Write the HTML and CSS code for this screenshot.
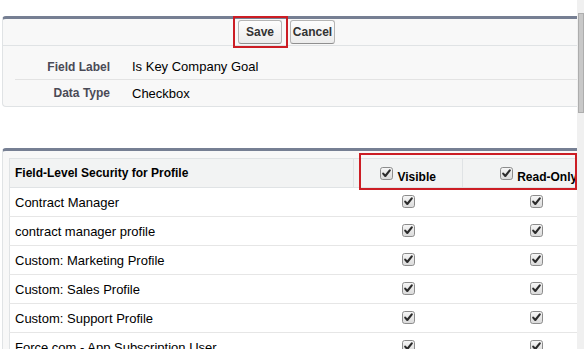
FILE: index.html
```html
<!DOCTYPE html>
<html>
<head>
<meta charset="utf-8">
<link rel="stylesheet" href="styles.css">
</head>
<body>
<svg class="defs" width="0" height="0" aria-hidden="true">
  <defs>
    <linearGradient id="cbg" x1="0" y1="0" x2="0" y2="1">
      <stop offset="0" stop-color="#f7f7f7"/>
      <stop offset="1" stop-color="#d9d9d9"/>
    </linearGradient>
    <symbol id="cb" viewBox="0 0 13 13">
      <rect x="0.5" y="0.5" width="12" height="12" rx="2.2" fill="url(#cbg)" stroke="#8c8c8c"/>
      <path d="M3.2 6.6 L5.3 9 L9.8 3.3" fill="none" stroke="#2b2b2b" stroke-width="2.1" stroke-linecap="round" stroke-linejoin="round"/>
    </symbol>
  </defs>
</svg>
<div class="viewport">
  <main class="page">
    <section class="panel panel-edit">
      <div class="btn-row">
        <button class="btn btn-save">Save</button>
        <button class="btn btn-cancel">Cancel</button>
      </div>
      <div class="details">
        <div class="drow drow-sep"><span class="dlabel">Field Label</span><span class="dval">Is Key Company Goal</span></div>
        <div class="drow"><span class="dlabel">Data Type</span><span class="dval">Checkbox</span></div>
      </div>
    </section>
    <section class="panel panel-fls">
      <span class="highlight"></span>
      <table class="fls">
        <colgroup><col class="c1"><col class="c2"><col class="c3"></colgroup>
        <thead>
          <tr>
            <th class="th-name">Field-Level Security for Profile</th>
            <th class="th-cb"><span class="th-in"><svg class="cb cb-h"><use href="#cb"/></svg> Visible</span></th>
            <th class="th-cb"><span class="th-in th-in-ro"><svg class="cb cb-h"><use href="#cb"/></svg> Read-Only</span></th>
          </tr>
        </thead>
        <tbody>
          <tr><td>Contract Manager</td><td class="td-cb"><svg class="cb"><use href="#cb"/></svg></td><td class="td-cb"><svg class="cb"><use href="#cb"/></svg></td></tr>
          <tr><td>contract manager profile</td><td class="td-cb"><svg class="cb"><use href="#cb"/></svg></td><td class="td-cb"><svg class="cb"><use href="#cb"/></svg></td></tr>
          <tr><td>Custom: Marketing Profile</td><td class="td-cb"><svg class="cb"><use href="#cb"/></svg></td><td class="td-cb"><svg class="cb"><use href="#cb"/></svg></td></tr>
          <tr><td>Custom: Sales Profile</td><td class="td-cb"><svg class="cb"><use href="#cb"/></svg></td><td class="td-cb"><svg class="cb"><use href="#cb"/></svg></td></tr>
          <tr><td>Custom: Support Profile</td><td class="td-cb"><svg class="cb"><use href="#cb"/></svg></td><td class="td-cb"><svg class="cb"><use href="#cb"/></svg></td></tr>
          <tr><td>Force.com - App Subscription User</td><td class="td-cb"><svg class="cb"><use href="#cb"/></svg></td><td class="td-cb"><svg class="cb"><use href="#cb"/></svg></td></tr>
        </tbody>
      </table>
    </section>
  </main>
  <div class="scrollbar"><div class="thumb"></div></div>
</div>
</body>
</html>
```

FILE: styles.css
```css
html, body {
  margin: 0;
  padding: 0;
  background: #fff;
}
body {
  font-family: "Liberation Sans", Arial, sans-serif;
  color: #000;
}
.defs {
  position: absolute;
  width: 0;
  height: 0;
}
.viewport {
  display: flex;
  width: 584px;
  height: 349px;
  overflow: hidden;
}
.page {
  flex: none;
  width: 577px;
  height: 349px;
  overflow: hidden;
  padding-top: 16px;
  box-sizing: border-box;
}
.scrollbar {
  flex: none;
  width: 7px;
  height: 349px;
  background: #f0f0f0;
  padding-left: 1px;
  box-sizing: border-box;
}
.thumb {
  margin-top: 13px;
  height: 100px;
  background: #c8c8c8;
  border: 1px solid #adadad;
  box-sizing: border-box;
}
.panel {
  margin-left: 2px;
  width: 660px;
  background: #f8f8f8;
  border-top: 3px solid #767f93;
  border-left: 1px solid #e0e3e5;
  border-bottom: 1px solid #e0e3e5;
  border-radius: 4px 0 0 4px;
  box-sizing: border-box;
}
.btn-row {
  display: flex;
  gap: 8px;
  padding: 1px 0 1px 235px;
  border-bottom: 1px solid #e0e3e5;
}
.btn {
  position: relative;
  height: 24px;
  font-family: "Liberation Sans", Arial, sans-serif;
  font-size: 12px;
  font-weight: bold;
  color: #333;
  background: linear-gradient(#fdfdfd, #ececec);
  border: 1px solid #b5b5b5;
  border-bottom-color: #8f8f8f;
  border-radius: 3px;
  margin: 0;
  line-height: 14px;
}
.btn-save {
  width: 44px;
  padding: 0;
}
.btn-save::after {
  content: "";
  position: absolute;
  left: -6px;
  right: -7px;
  top: -5px;
  bottom: -5px;
  border: 2px solid #cc1d24;
}
.btn-cancel {
  width: 45px;
  padding: 0;
}
.details {
  padding-top: 8px;
}
.drow {
  display: flex;
  align-items: center;
  height: 26px;
  margin-left: 12px;
  box-sizing: border-box;
}
.drow-sep {
  border-bottom: 1px solid #e3e3e3;
}
.dlabel {
  width: 95px;
  flex: none;
  text-align: right;
  font-size: 12px;
  font-weight: bold;
  color: #4a4a56;
}
.dval {
  padding-left: 22px;
  font-size: 13px;
  color: #000;
}
.panel-fls {
  position: relative;
  margin-top: 41px;
  padding: 7px 0 0 6px;
  height: 240px;
}
.highlight {
  position: absolute;
  left: 356px;
  top: 2px;
  width: 218px;
  height: 37px;
  border: 2px solid #cc1d24;
  box-sizing: border-box;
  z-index: 2;
}
.fls {
  border-collapse: collapse;
  table-layout: fixed;
  width: 601px;
  background: #fff;
  border: 1px solid #e0e3e5;
}
.c1 { width: 344px; }
.c2 { width: 109px; }
.c3 { width: 148px; }
.fls th {
  height: 29px;
  box-sizing: border-box;
  background: #f2f3f3;
  font-size: 12px;
  font-weight: bold;
  color: #000;
  border-bottom: 1px solid #e0e3e5;
  border-right: 1px solid #e0e3e5;
  padding: 0;
  vertical-align: middle;
  white-space: nowrap;
}
.th-name {
  text-align: left;
  padding-left: 5px !important;
}
.th-cb {
  text-align: center;
}
.th-in {
  position: relative;
  top: 2px;
}
.th-in-ro {
  left: 2px;
}
.fls td {
  height: 28px;
  font-size: 13px;
  padding: 0 0 0 5px;
  border-bottom: 1px solid #e6e6e6;
  white-space: nowrap;
}
.fls td.td-cb {
  padding: 0;
  text-align: center;
}
.cb {
  width: 13px;
  height: 13px;
  vertical-align: middle;
}
.td-cb .cb {
  display: block;
  margin: 0 auto;
  position: relative;
  top: -1px;
}
.cb-h {
  vertical-align: 1px;
  margin-right: 1px;
}
```
